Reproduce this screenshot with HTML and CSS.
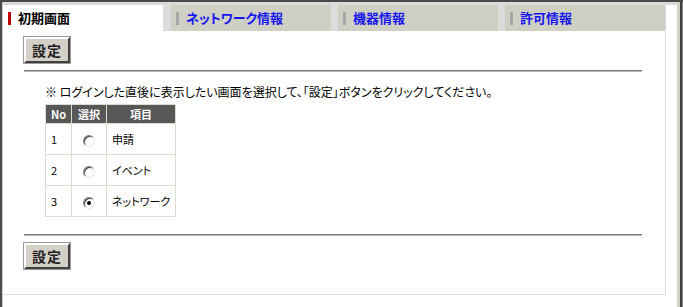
FILE: index.html
```html
<!DOCTYPE html>
<html lang="ja">
<head>
    <meta charset="utf-8">
    <title>初期画面</title>
    <link rel="stylesheet" href="styles.css">
</head>
<body>
    <div class="frame">
        <div class="panel">
            <ul class="tabs">
                <li class="tab active"><span class="mark"></span><span class="label">初期画面</span></li>
                <li class="tab"><span class="mark"></span><a href="#" class="label">ネットワーク情報</a></li>
                <li class="tab"><span class="mark"></span><a href="#" class="label">機器情報</a></li>
                <li class="tab"><span class="mark"></span><a href="#" class="label">許可情報</a></li>
            </ul>
            <div class="content">
                <button class="btn">設定</button>
                <div class="rule"></div>
                <p class="note">※ ログインした直後に表示したい画面を選択して、「設定」ボタンをクリックしてください。</p>
                <table class="list">
                    <tr>
                        <th class="c-no">No</th>
                        <th class="c-sel">選択</th>
                        <th class="c-item">項目</th>
                    </tr>
                    <tr>
                        <td>1</td>
                        <td class="center"><input type="radio" name="top" class="radio"></td>
                        <td>申請</td>
                    </tr>
                    <tr>
                        <td>2</td>
                        <td class="center"><input type="radio" name="top" class="radio"></td>
                        <td>イベント</td>
                    </tr>
                    <tr>
                        <td>3</td>
                        <td class="center"><input type="radio" name="top" class="radio" checked></td>
                        <td>ネットワーク</td>
                    </tr>
                </table>
                <div class="rule rule-low"></div>
                <button class="btn btn-low">設定</button>
            </div>
        </div>
    </div>
</body>
</html>
```

FILE: styles.css
```css
* {
    margin: 0px;
    padding: 0px;
    list-style: none;
    box-sizing: border-box;
}

body {
    background: #fff;
    font-family: "Noto Sans CJK JP", "Liberation Sans", sans-serif;
    font-feature-settings: "palt";
    color: #000;
}

.frame {
    width: 683px;
    height: 307px;
    border-top: 2px solid #4a4a4a;
    border-left: 2px solid #4a4a4a;
    padding-top: 3px;
    padding-left: 1px;
    background: linear-gradient(#dadada, #dadada) no-repeat 0 0 / 100% 3px;
    box-shadow: inset -1px 0 #8a8a8a, inset -3px 0 #404040, inset -6px 0 #d4d0c8;
    position: relative;
}

.frame::before {
    content: "";
    position: absolute;
    left: 0;
    top: 0;
    width: 1px;
    height: 100%;
    background: #d4d0c8;
}

.panel {
    width: 663px;
    height: 290px;
    background: #fff;
    border-right: 1px solid #dcdcdc;
    border-bottom: 1px solid #dcdcdc;
}

.tabs {
    display: flex;
    height: 26px;
    background: #dcdcdc;
}

.tab {
    width: 160px;
    display: flex;
    align-items: center;
    padding-left: 5px;
    background: #cfcfc3;
    margin-left: 7px;
}

.tab:nth-child(2) {
    margin-left: 8px;
}

.tab.active {
    background: #fff;
    margin-left: 0;
}

.mark {
    width: 3px;
    height: 13px;
    background: #a6a6a6;
}

.active .mark {
    background: #c00000;
}

.label {
    margin-left: 7px;
    font-size: 13px;
    font-weight: bold;
    color: #1515ee;
    text-decoration: none;
    line-height: 16px;
}

.active .label {
    color: #000;
}

.content {
    padding: 6px 23px 0 21px;
}

.btn {
    display: block;
    width: 46px;
    height: 26px;
    background: #d4d0c8;
    border: 2px solid;
    border-color: #fff #404040 #404040 #fff;
    box-shadow: 0 0 0 1px #9a9a9a;
    font-family: "Noto Sans CJK JP", sans-serif;
    font-size: 14px;
    font-weight: bold;
    color: #222;
    letter-spacing: 1px;
    line-height: 20px;
}

.rule {
    margin-top: 7px;
    height: 2px;
    background: #7a7a7a;
    border-bottom: 1px solid #b8b8b8;
}

.rule-low {
    margin-top: 17px;
}

.btn-low {
    margin-top: 7px;
}

.note {
    margin: 12px 0 0 21px;
    font-size: 12px;
    line-height: 15px;
}

.list {
    margin: 5px 0 0 21px;
    border-collapse: collapse;
    table-layout: fixed;
    width: 130px;
    font-size: 11px;
}

.list th,
.list td {
    border: 1px solid #dcdcd0;
    text-align: left;
    padding: 0 5px;
    white-space: nowrap;
}

.list th {
    height: 19px;
    background: #575757;
    color: #fff;
    font-weight: bold;
    text-align: center;
}

.list td {
    height: 31px;
}

.c-no {
    width: 26px;
}

.c-sel {
    width: 35px;
}

.c-item {
    width: 69px;
}

.list td.center {
    text-align: center;
}

.radio {
    appearance: none;
    -webkit-appearance: none;
    display: inline-block;
    vertical-align: middle;
    width: 12px;
    height: 12px;
    border-radius: 50%;
    border: 1px solid;
    border-color: #808080 #e8e8e8 #e8e8e8 #808080;
    box-shadow: inset 1px 1px #404040;
    background: #fff;
    position: relative;
}

.radio:checked::after {
    content: "";
    position: absolute;
    left: 3px;
    top: 3px;
    width: 4px;
    height: 4px;
    border-radius: 50%;
    background: #000;
}
```
